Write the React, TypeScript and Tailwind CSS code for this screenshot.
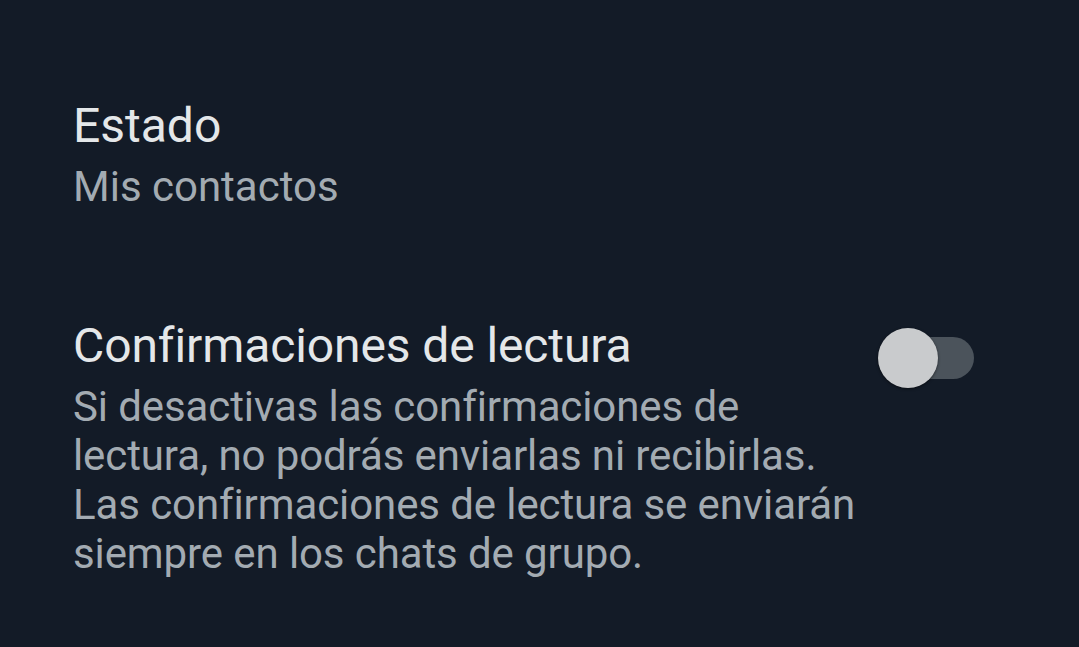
import React from "react";

export default function App() {
  return (
    <div
      className="w-[1079px] h-[647px] bg-[#131b27] overflow-hidden"
      style={{ fontFamily: "Roboto, 'Liberation Sans', sans-serif" }}
    >
      <div className="pl-[73px] pt-[98px] flex flex-col">
        <div className="text-[48px] leading-[56px] text-[#e4e7e9]">Estado</div>
        <div className="mt-[9px] text-[42px] leading-[48.5px] text-[#a3abb2]">Mis contactos</div>

        <div className="mt-[106px] flex items-start">
          <div className="w-[800px] flex flex-col">
            <div className="text-[48px] leading-[56px] text-[#e4e7e9] tracking-[-0.1px]">Confirmaciones de lectura</div>
            <div className="mt-[8px] text-[42px] leading-[49px] text-[#a3abb2] tracking-[-0.1px]">
              Si desactivas las confirmaciones de
              <br />
              lectura, no podrás enviarlas ni recibirlas.
              <br />
              Las confirmaciones de lectura se enviarán
              <br />
              siempre en los chats de grupo.
            </div>
          </div>
          <div className="relative ml-[5px] mt-[10px] w-[96px] h-[60px] shrink-0">
            <div className="absolute left-[10px] right-0 top-[9px] h-[42px] rounded-full bg-[#4b535b]" />
            <div className="absolute left-0 top-0 w-[60px] h-[60px] rounded-full bg-[#c9cbcd] shadow-[0_1px_3px_rgba(0,0,0,0.5)]" />
          </div>
        </div>
      </div>
    </div>
  );
}
